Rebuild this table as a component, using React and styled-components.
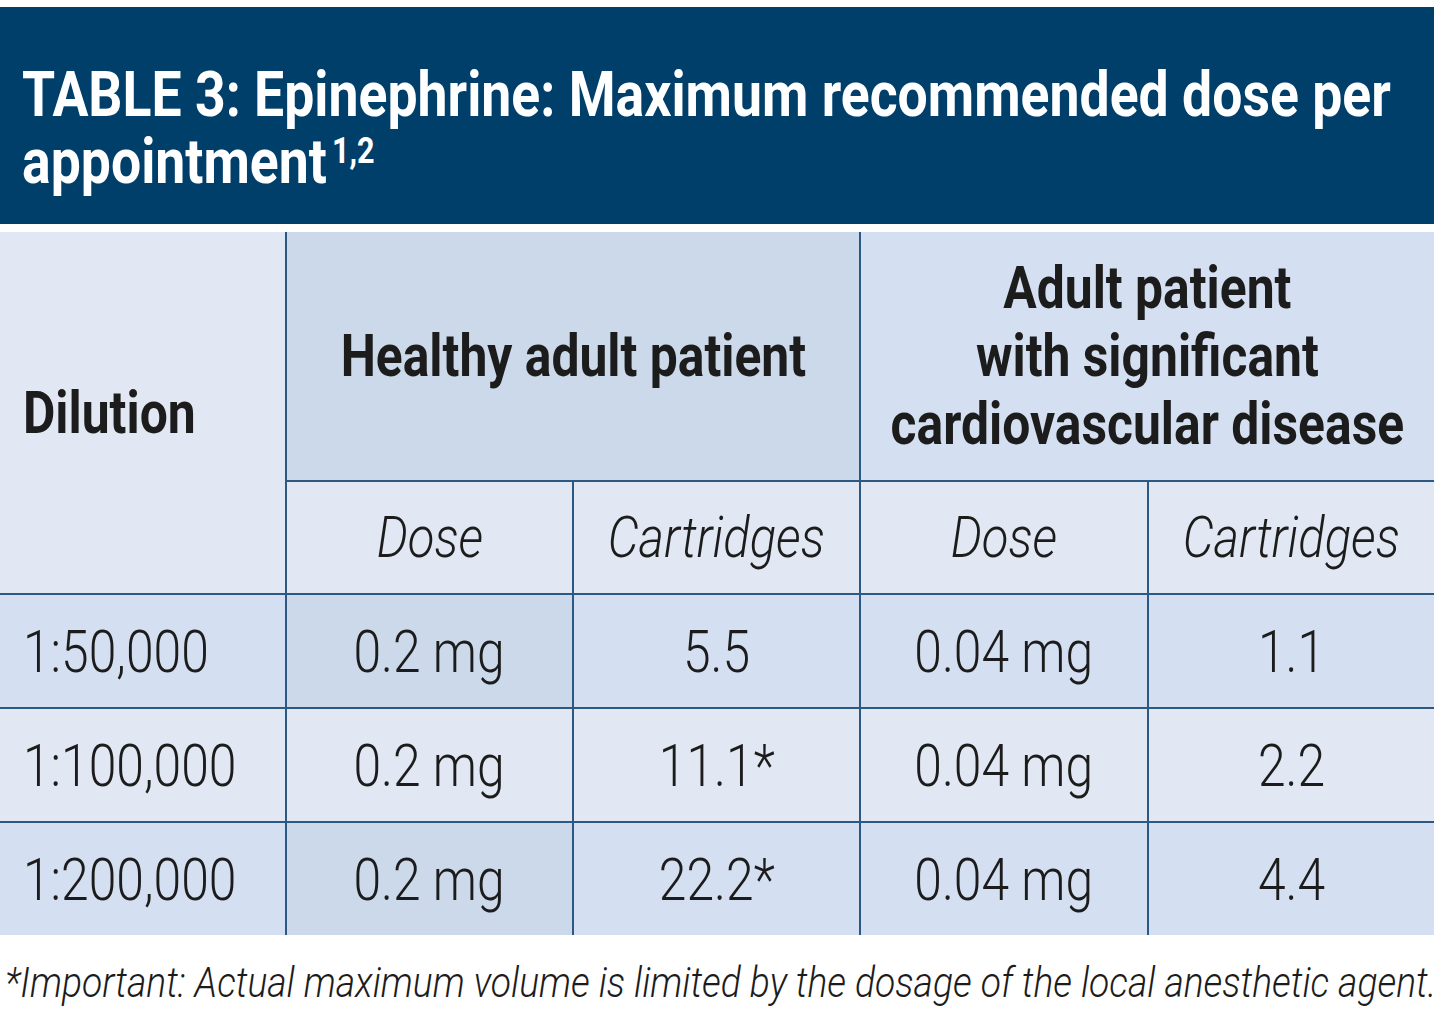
import styled, { createGlobalStyle } from "styled-components";

const GlobalStyle = createGlobalStyle`
  html, body {
    margin: 0;
    padding: 0;
    background: #FFFFFF;
    overflow: hidden;
  }
  body {
    font-family: Roboto, "DejaVu Sans Condensed", "Liberation Sans", sans-serif;
    color: #1A1A1A;
  }
`;

const Page = styled.div`
  width: 1434px;
  padding-top: 7px;
`;

const TitleBar = styled.div`
  background-color: #013F6B;
  height: 217px;
  box-sizing: border-box;
  padding: 54px 22px 0 22px;
`;

// the print face is a compressed grotesque, so glyphs are narrowed horizontally
const Squeeze = styled.span`
  display: inline-block;
  white-space: nowrap;
  transform: scaleX(${p => p.$k});
  transform-origin: ${p => (p.$left ? "left center" : "center center")};
`;

const Title = styled.h1`
  margin: 0;
  color: #FFFFFF;
  font-size: 63px;
  line-height: 67px;
  font-weight: 700;

  sup {
    font-size: 36px;
    line-height: 0;
    vertical-align: 20px;
    margin-left: 6px;
  }
`;

const Table = styled.div`
  margin-top: 8px;
  display: grid;
  grid-template-columns: 285px 287px 287px 288px 287px;
  grid-template-rows: 248px 113px 114px 114px 114px;
`;

const Cell = styled.div`
  display: flex;
  align-items: center;
  justify-content: ${p => (p.$left ? "flex-start" : "center")};
  text-align: center;
  box-sizing: border-box;
  padding-left: ${p => (p.$left ? "23px" : "0")};
  background-color: ${p => p.$bg};
  border-left: ${p => (p.$noLeft ? "none" : "2px solid #2C5984")};
  border-top: ${p => (p.$noTop ? "none" : "2px solid #2C5984")};
  grid-column: ${p => p.$col || "auto"};
  grid-row: ${p => p.$row || "auto"};
`;

const GroupLabel = styled.span`
  font-size: 60px;
  line-height: 68px;
  font-weight: 700;
  color: #1C1C1C;
`;

const SubLabel = styled.span`
  font-size: 57px;
  font-style: italic;
  font-weight: 300;
  color: #1C1C1C;
`;

const Value = styled.span`
  font-size: 60px;
  font-weight: 300;
  color: #1C1C1C;
`;

const Footnote = styled.p`
  margin: 22px 0 0 5px;
  font-size: 43px;
  font-style: italic;
  font-weight: 300;
  color: #1C1C1C;
`;

const LIGHT = "#E1E8F3";
const MID = "#D4E0F1";
const DARK = "#CCD9EA";

const K_TITLE = 0.85;
const K_BOLD = 0.83;
const K_ITALIC = 0.86;
const K_VALUE = 0.83;
const K_NOTE = 0.866;

const rows = [
  { dilution: "1:50,000", cells: ["0.2 mg", "5.5", "0.04 mg", "1.1"], shade: true },
  { dilution: "1:100,000", cells: ["0.2 mg", "11.1*", "0.04 mg", "2.2"], shade: false },
  { dilution: "1:200,000", cells: ["0.2 mg", "22.2*", "0.04 mg", "4.4"], shade: true },
];

export default function App() {
  return (
    <Page>
      <GlobalStyle />
      <TitleBar>
        <Title>
          <Squeeze $k={K_TITLE} $left>
            TABLE 3: Epinephrine: Maximum recommended dose per
            <br />
            appointment<sup>1,2</sup>
          </Squeeze>
        </Title>
      </TitleBar>

      <Table>
        <Cell $col="1" $row="1 / 3" $bg={LIGHT} $left $noLeft $noTop>
          <GroupLabel>
            <Squeeze $k={K_BOLD} $left>Dilution</Squeeze>
          </GroupLabel>
        </Cell>
        <Cell $col="2 / 4" $row="1" $bg={DARK} $noTop>
          <GroupLabel>
            <Squeeze $k={K_BOLD}>Healthy adult patient</Squeeze>
          </GroupLabel>
        </Cell>
        <Cell $col="4 / 6" $row="1" $bg={MID} $noTop>
          <GroupLabel>
            <Squeeze $k={K_BOLD}>
              Adult patient
              <br />
              with significant
              <br />
              cardiovascular disease
            </Squeeze>
          </GroupLabel>
        </Cell>
        {["Dose", "Cartridges", "Dose", "Cartridges"].map((label, i) => (
          <Cell key={i} $bg={LIGHT}>
            <SubLabel>
              <Squeeze $k={K_ITALIC}>{label}</Squeeze>
            </SubLabel>
          </Cell>
        ))}

        {rows.map(row => [
          <Cell key={row.dilution} $bg={row.shade ? MID : LIGHT} $left $noLeft>
            <Value>
              <Squeeze $k={K_VALUE} $left>{row.dilution}</Squeeze>
            </Value>
          </Cell>,
          ...row.cells.map((v, i) => (
            <Cell key={row.dilution + i} $bg={row.shade ? (i === 0 ? DARK : MID) : LIGHT}>
              <Value>
                <Squeeze $k={K_VALUE}>{v}</Squeeze>
              </Value>
            </Cell>
          )),
        ])}
      </Table>

      <Footnote>
        <Squeeze $k={K_NOTE} $left>
          *Important: Actual maximum volume is limited by the dosage of the local anesthetic agent.
        </Squeeze>
      </Footnote>
    </Page>
  );
}
